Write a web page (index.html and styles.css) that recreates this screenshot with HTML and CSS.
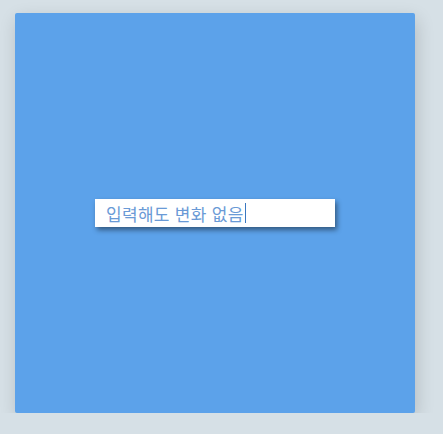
FILE: index.html
```html
<!DOCTYPE html>
<html lang="ko">
<head>
<meta charset="utf-8">
<link rel="stylesheet" href="styles.css">
</head>
<body>
<div class="stage">
  <div class="panel">
    <div class="field"><span class="text">입력해도 변화 없음</span><span class="caret"></span></div>
  </div>
</div>
</body>
</html>
```
FILE: styles.css
```css
html, body {
  margin: 0;
  background: #d6e0e6;
}
.stage {
  padding: 13px 0 0 15px;
}
.panel {
  width: 400px;
  height: 400px;
  background: #5ca2ea;
  border-radius: 2px;
  box-shadow: 2px 6px 18px rgba(0, 0, 0, 0.16);
  display: flex;
  align-items: center;
  justify-content: center;
}
.field {
  width: 240px;
  height: 28px;
  box-sizing: border-box;
  background: #fff;
  padding: 0 11px;
  display: flex;
  align-items: center;
  box-shadow: 2px 3px 5px rgba(0, 0, 0, 0.45);
  font-family: "Noto Sans CJK KR", "Noto Sans", sans-serif;
  font-size: 17px;
  letter-spacing: 0.3px;
  color: #6a9ad6;
}
.caret {
  width: 1px;
  height: 20px;
  background: #3a78c0;
  margin-left: 1px;
}
```
